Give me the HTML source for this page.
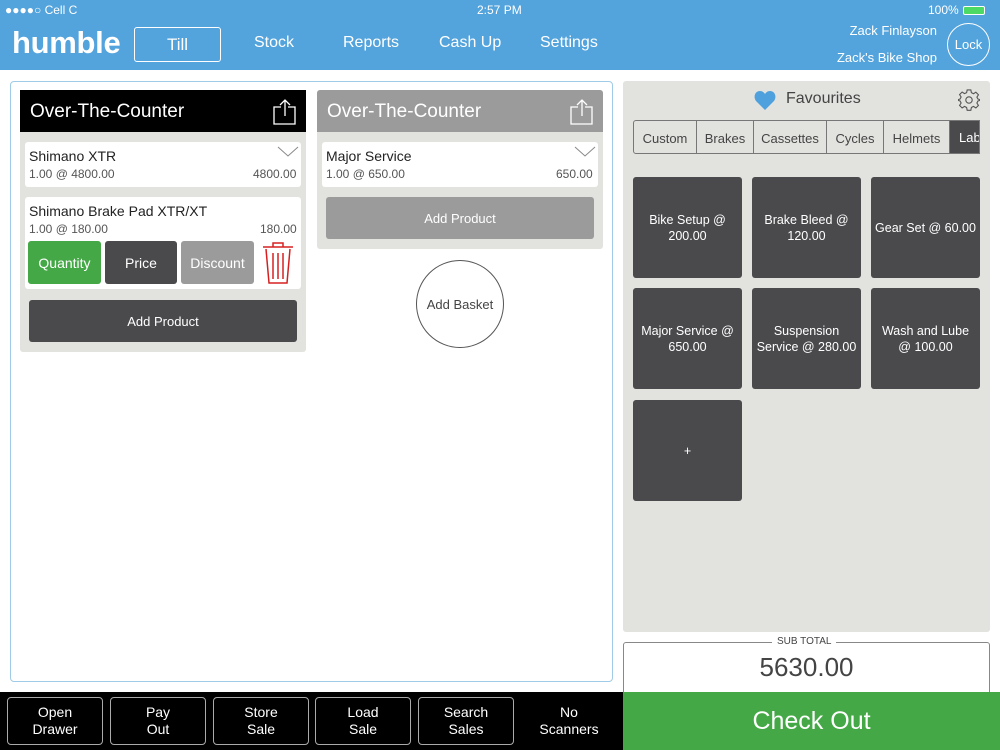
<!DOCTYPE html>
<html><head><meta charset="utf-8"><style>
*{box-sizing:border-box;margin:0;padding:0}
body{width:1000px;height:750px;position:relative;overflow:hidden;background:#fff;font-family:"Liberation Sans",sans-serif;color:#222}
.a{position:absolute}
.hdr{left:0;top:0;width:1000px;height:70px;background:#53a3dc;color:#fff}
.nav{top:31px;font-size:16px;color:#fff}
.c{display:flex;align-items:center;justify-content:center;text-align:center}
.tile{background:#4a4a4d;color:#fff;border-radius:3px;width:109px;height:101px;font-size:12.5px;line-height:16px}
.tab{top:0;height:34px;border-right:1px solid #777;font-size:13px;color:#444}
.bb{top:697px;width:96px;height:48px;border:1px solid #aaa;border-radius:4px;color:#fff;font-size:14px;line-height:17px}
.item{background:#fff;border-radius:3px}
</style></head><body>
<div class="a hdr">
 <div class="a" style="left:5px;top:3px;font-size:12px">●●●●○ Cell C</div>
 <div class="a" style="left:477px;top:3px;font-size:12px">2:57 PM</div>
 <div class="a" style="left:928px;top:3px;font-size:12px">100%</div>
 <div class="a" style="left:963px;top:6px;width:22px;height:9px;background:#4cd964;border:1px solid #fff;border-radius:2px"></div>
 <div class="a" style="left:12px;top:25px;font-size:31px;font-weight:bold;letter-spacing:-0.3px">humble</div>
 <div class="a c" style="left:134px;top:27px;width:87px;height:35px;border:1px solid #fff;border-radius:3px;font-size:17px">Till</div>
 <div class="a nav" style="left:254px;top:34px">Stock</div>
 <div class="a nav" style="left:343px;top:34px">Reports</div>
 <div class="a nav" style="left:439px;top:34px">Cash Up</div>
 <div class="a nav" style="left:540px;top:34px">Settings</div>
 <div class="a" style="right:63px;top:23px;font-size:13px">Zack Finlayson</div>
 <div class="a" style="right:63px;top:50px;font-size:13px">Zack's Bike Shop</div>
 <div class="a c" style="left:947px;top:23px;width:43px;height:43px;border:1px solid #fff;border-radius:50%;font-size:13px">Lock</div>
</div>

<div class="a" style="left:10px;top:81px;width:603px;height:601px;border:1px solid #9fcbe6;border-radius:4px"></div>

<div class="a" style="left:20px;top:90px;width:286px;height:262px;background:#e2e2df;border-radius:3px"></div>
<div class="a" style="left:20px;top:90px;width:286px;height:42px;background:#000;color:#fff;font-size:19px;padding:11px 10px">Over-The-Counter</div>
<svg class="a" style="left:272px;top:98px" width="26" height="28" viewBox="0 0 26 28" fill="none" stroke="#fff" stroke-width="1.3"><path d="M9 9H2v17h21V9h-7M13 18V2M8 7l5-5 5 5"/></svg>
<div class="a item" style="left:25px;top:142px;width:276px;height:45px"></div>
<div class="a" style="left:29px;top:148px;font-size:14px">Shimano XTR</div>
<div class="a" style="left:29px;top:167px;font-size:12px;color:#555">1.00 @ 4800.00</div>
<div class="a" style="left:253px;top:167px;font-size:12px;color:#555">4800.00</div>
<svg class="a" style="left:277px;top:146px" width="22" height="12"><path d="M1 1l10 9 10-9" fill="none" stroke="#888"/></svg>
<div class="a item" style="left:25px;top:197px;width:276px;height:92px"></div>
<div class="a" style="left:29px;top:203px;font-size:14px">Shimano Brake Pad XTR/XT</div>
<div class="a" style="left:29px;top:222px;font-size:12px;color:#555">1.00 @ 180.00</div>
<div class="a" style="left:260px;top:222px;font-size:12px;color:#555">180.00</div>
<div class="a c" style="left:28px;top:241px;width:73px;height:43px;background:#43a845;color:#fff;border-radius:3px;font-size:14px">Quantity</div>
<div class="a c" style="left:105px;top:241px;width:72px;height:43px;background:#4a4a4d;color:#fff;border-radius:3px;font-size:14px">Price</div>
<div class="a c" style="left:181px;top:241px;width:73px;height:43px;background:#9b9b9b;color:#fff;border-radius:3px;font-size:14px">Discount</div>
<svg class="a" style="left:261px;top:241px" width="34" height="44" viewBox="0 0 34 44" fill="none" stroke="#d62020" stroke-width="1.5"><path d="M2 6h30M12 6V2h10v4M5 8l3 34h18l3-34M12 12v26M17 12v26M22 12v26"/></svg>
<div class="a c" style="left:29px;top:300px;width:268px;height:42px;background:#4a4a4d;color:#fff;border-radius:3px;font-size:13px">Add Product</div>

<div class="a" style="left:317px;top:90px;width:286px;height:159px;background:#e2e2df;border-radius:3px"></div>
<div class="a" style="left:317px;top:90px;width:286px;height:42px;background:#9b9b9b;color:#fff;font-size:19px;padding:11px 10px;border-radius:3px 3px 0 0">Over-The-Counter</div>
<svg class="a" style="left:569px;top:98px" width="26" height="28" viewBox="0 0 26 28" fill="none" stroke="#fff" stroke-width="1.3"><path d="M9 9H2v17h21V9h-7M13 18V2M8 7l5-5 5 5"/></svg>
<div class="a item" style="left:322px;top:142px;width:276px;height:45px"></div>
<div class="a" style="left:326px;top:148px;font-size:14px">Major Service</div>
<div class="a" style="left:326px;top:167px;font-size:12px;color:#555">1.00 @ 650.00</div>
<div class="a" style="left:556px;top:167px;font-size:12px;color:#555">650.00</div>
<svg class="a" style="left:574px;top:146px" width="22" height="12"><path d="M1 1l10 9 10-9" fill="none" stroke="#888"/></svg>
<div class="a c" style="left:326px;top:197px;width:268px;height:42px;background:#9b9b9b;color:#fff;border-radius:3px;font-size:13px">Add Product</div>
<div class="a c" style="left:416px;top:260px;width:88px;height:88px;border:1px solid #555;border-radius:50%;font-size:13px;color:#444">Add Basket</div>

<div class="a" style="left:623px;top:81px;width:367px;height:551px;background:#e2e2df;border-radius:3px"></div>
<svg class="a" style="left:754px;top:91px" width="22" height="19" viewBox="0 0 22 19"><path d="M11 19L2 10C-1 6 1 0 6 0c2.5 0 4 1.5 5 3 1-1.5 2.5-3 5-3 5 0 7 6 4 10z" fill="#4ea1dc"/></svg>
<div class="a" style="left:786px;top:90px;font-size:16px;color:#444">Favourites</div>
<svg class="a" style="left:958px;top:89px" width="22" height="22" viewBox="0 0 24 24" fill="none" stroke="#555" stroke-width="1.2"><circle cx="12" cy="12" r="3.5"/><path d="M10 1h4l.6 3 2.3 1.2 2.6-1.7 2.8 2.8-1.7 2.6L21.8 11l2.2.6v.8l-2.2.6-1.2 2.3 1.7 2.6-2.8 2.8-2.6-1.7-2.3 1.2-.6 3h-4l-.6-3-2.3-1.2-2.6 1.700-2.8-2.8 1.7-2.6L2.2 13 0 12.4v-.8l2.2-.6 1.2-2.3-1.7-2.6 2.8-2.8 2.6 1.7L9.4 4z"/></svg>
<div class="a" style="left:633px;top:120px;width:347px;height:34px;border:1px solid #777;border-radius:3px 0 0 3px;overflow:hidden;background:#e2e2df">
 <div class="a c tab" style="left:0;width:63px">Custom</div>
 <div class="a c tab" style="left:63px;width:57px">Brakes</div>
 <div class="a c tab" style="left:120px;width:73px">Cassettes</div>
 <div class="a c tab" style="left:193px;width:57px">Cycles</div>
 <div class="a c tab" style="left:250px;width:66px">Helmets</div>
 <div class="a tab" style="left:316px;width:40px;background:#4a4a4d;color:#fff;padding:9px 0 0 9px;border:0">Labour</div>
</div>
<div class="a c tile" style="left:633px;top:177px">Bike Setup @<br>200.00</div>
<div class="a c tile" style="left:752px;top:177px">Brake Bleed @<br>120.00</div>
<div class="a c tile" style="left:871px;top:177px">Gear Set @ 60.00</div>
<div class="a c tile" style="left:633px;top:288px">Major Service @<br>650.00</div>
<div class="a c tile" style="left:752px;top:288px">Suspension<br>Service @ 280.00</div>
<div class="a c tile" style="left:871px;top:288px">Wash and Lube<br>@ 100.00</div>
<div class="a c tile" style="left:633px;top:400px">+</div>

<div class="a" style="left:623px;top:642px;width:367px;height:56px;border:1px solid #888;border-radius:3px"></div>
<div class="a" style="left:772px;top:636px;background:#fff;padding:0 5px;font-size:10px;color:#444">SUB TOTAL</div>
<div class="a" style="left:623px;top:652px;width:367px;text-align:center;font-size:26px;color:#444">5630.00</div>

<div class="a" style="left:0;top:692px;width:623px;height:58px;background:#000"></div>
<div class="a c bb" style="left:7px">Open<br>Drawer</div>
<div class="a c bb" style="left:110px">Pay<br>Out</div>
<div class="a c bb" style="left:213px">Store<br>Sale</div>
<div class="a c bb" style="left:315px">Load<br>Sale</div>
<div class="a c bb" style="left:418px">Search<br>Sales</div>
<div class="a c bb" style="left:521px;border:0">No<br>Scanners</div>
<div class="a c" style="left:623px;top:692px;width:377px;height:58px;background:#43a845;color:#fff;font-size:25px">Check Out</div>
</body></html>
